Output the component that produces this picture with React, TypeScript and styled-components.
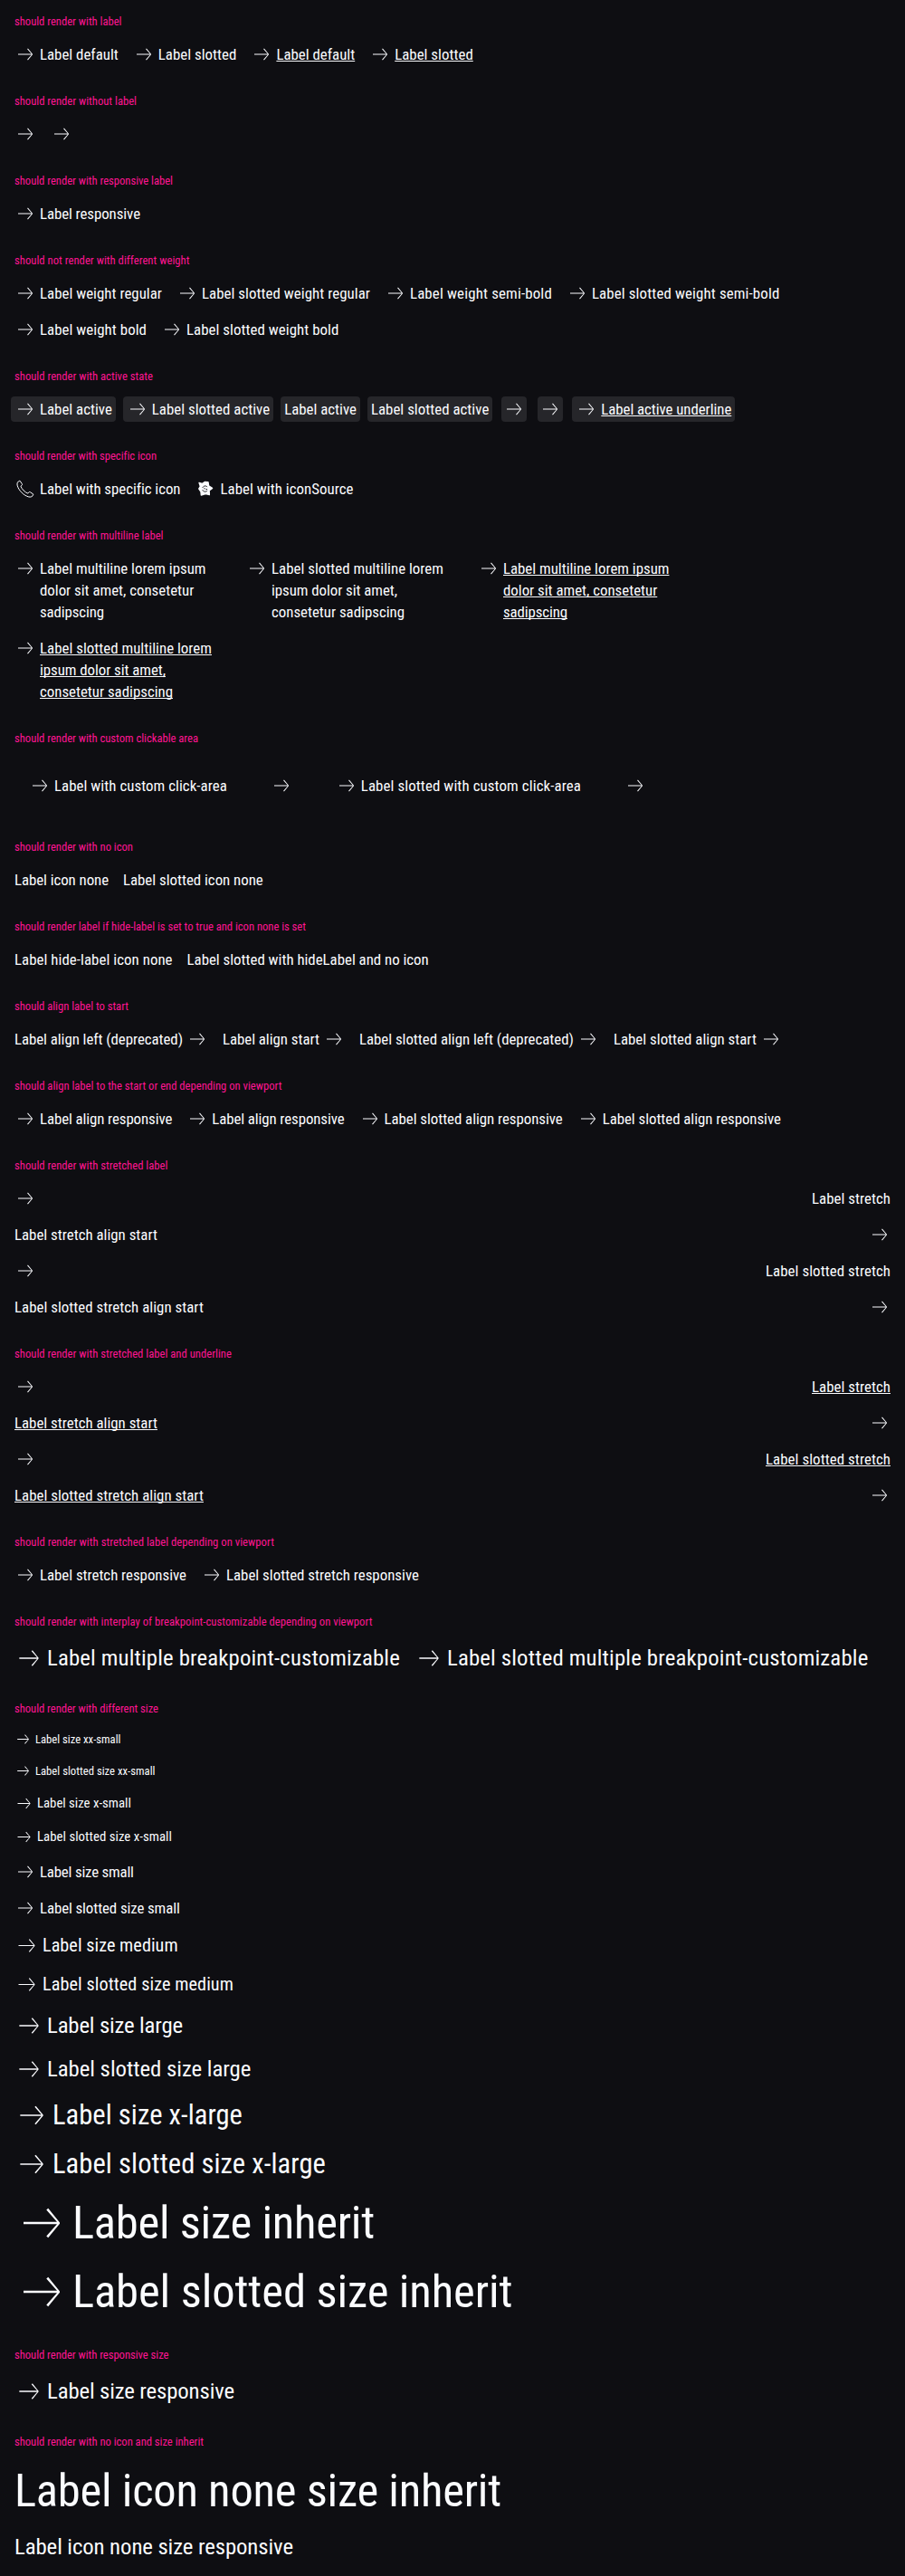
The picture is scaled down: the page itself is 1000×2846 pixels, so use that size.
import React, { useLayoutEffect, useRef, useState } from "react";
import styled, { createGlobalStyle, css } from "styled-components";

type Size = "xxs" | "xs" | "sm" | "md" | "lg" | "xl" | "inherit";

const sizes: Record<Size, { font: number; line: number }> = {
  xxs: { font: 12.66, line: 19 },
  xs: { font: 14.77, line: 21 },
  sm: { font: 16.88, line: 24 },
  md: { font: 20.2, line: 27 },
  lg: { font: 24.8, line: 32 },
  xl: { font: 30.5, line: 38 },
  inherit: { font: 50.6, line: 60 },
};

const GlobalStyle = createGlobalStyle`
  body {
    margin: 0;
    background: #0e0e12;
    color: #fbfcff;
    font-family: "Roboto Condensed", Roboto, "Liberation Sans", sans-serif;
    font-stretch: 75%;
    font-weight: 400;
  }
`;

const Page = styled.main`
  box-sizing: border-box;
  display: flex;
  flex-direction: column;
  gap: 32px;
  padding: 16px;
`;

const Section = styled.section`
  display: flex;
  flex-direction: column;
  gap: 16px;
`;

const Title = styled.h2`
  display: flex;
  margin: 0;
  font-size: 12.66px;
  font-weight: 400;
  line-height: 16px;
  color: #ff1493;
`;

const Items = styled.div<{ $column?: boolean }>`
  display: flex;
  flex-flow: ${(p) => (p.$column ? "column nowrap" : "row wrap")};
  align-items: ${(p) => (p.$column ? "stretch" : "flex-start")};
  gap: 16px;
`;

const Link = styled.a<{
  $size: Size;
  $active?: boolean;
  $bare?: boolean;
  $reverse?: boolean;
  $stretch?: boolean;
  $padded?: boolean;
  $block?: boolean;
}>`
  box-sizing: border-box;
  display: flex;
  flex-direction: ${(p) => (p.$reverse ? "row-reverse" : "row")};
  justify-content: ${(p) => (p.$stretch ? "space-between" : "flex-start")};
  align-items: flex-start;
  gap: 4px;
  width: ${(p) => (p.$stretch ? "100%" : p.$block ? "240px" : "auto")};
  font-size: ${(p) => sizes[p.$size].font}px;
  line-height: ${(p) => sizes[p.$size].line}px;
  color: inherit;
  ${(p) => p.$padded && css`padding: 16px;`}
  ${(p) =>
    p.$active &&
    css`
      margin: -2px ${p.$bare ? "-2px" : "-4px"};
      padding: 2px ${p.$bare ? "2px" : "4px"};
      border-radius: 4px;
      background: #26262a;
    `}
`;

const Text = styled.span<{ $underline?: boolean }>`
  display: block;
  white-space: nowrap;
  ${(p) =>
    p.$underline &&
    css`
      text-decoration: underline;
      text-decoration-thickness: 1px;
      text-decoration-skip-ink: none;
      text-underline-offset: 1px;
    `}
`;

const Lines = styled.span`
  display: flex;
  flex-direction: column;
  align-items: flex-start;
`;

const Glyph = styled.svg<{ $size: Size }>`
  flex: none;
  display: block;
  width: ${(p) => sizes[p.$size].line}px;
  height: ${(p) => sizes[p.$size].line}px;
  fill: #fbfcff;
`;

/** Text tracked so that its advance is exactly `width` pixels. */
function Tracked({ text, width, underline }: { text: string; width: number; underline?: boolean }) {
  const ref = useRef<HTMLSpanElement>(null);
  const [spacing, setSpacing] = useState(0);
  useLayoutEffect(() => {
    const el = ref.current;
    if (!el) return;
    el.style.letterSpacing = "0.001px";
    const natural = el.getBoundingClientRect().width;
    const next = (width - natural) / text.length;
    el.style.letterSpacing = `${next}px`;
    setSpacing(next);
  }, [text, width]);
  return (
    <Text ref={ref} $underline={underline} style={{ letterSpacing: spacing }}>
      {text}
    </Text>
  );
}

type IconName = "arrow" | "phone" | "flower" | "none";

function Icon({ name, size }: { name: IconName; size: Size }) {
  if (name === "phone")
    return (
      <Glyph $size={size} viewBox="0 0 24 24">
        <path
          d="M5.9 3.1C3.3 4 2.4 6.2 3.3 8.9c1.7 5.200 6.700 10.200 11.900 11.900 2.700.9 4.900-.1 5.700-2.600l-3.400-2.500c-.6-.4-1.300-.3-1.700.2l-1 1.200C11.800 16.100 8 12.300 6.900 9.200l1.200-1c.5-.4.6-1.100.2-1.700z"
          fill="none"
          stroke="#fbfcff"
          strokeWidth="1"
          strokeLinejoin="round"
        />
      </Glyph>
    );
  if (name === "flower")
    return (
      <Glyph $size={size} viewBox="0 0 24 24">
        <path
          d="M5 5.400L8.600 6.300 11.200 4.500 15 4.600 15.700 8.900 19.600 11.400 16.200 14 16.400 18.700 12.200 17.600 7.300 19.100 7 15.500 4.700 12 6.300 9.400Z"
          stroke="#fbfcff"
          strokeWidth="1.300"
          strokeLinejoin="round"
        />
        <path d="M8.800 11c.8-2.200 3.800-2.900 5.300-.9M8.700 13.200c.9 2.200 4 2.700 5.400.7" fill="none" stroke="#0e0e12" strokeWidth="0.900" />
        <path d="M10.400 11.800h1.300M12.600 12.500h1.400" stroke="#0e0e12" strokeWidth="1" />
      </Glyph>
    );
  return (
    <Glyph $size={size} viewBox="0 0 24 24">
      <path d="M14.900 5.500l-.8.700 4.700 5.300H4v1h14.800l-4.700 5.300.8.700L20 12.250v-.5z" />
    </Glyph>
  );
}

type Entry = {
  lines?: [string, number][];
  icon?: IconName;
  size?: Size;
  underline?: boolean;
  active?: boolean;
  reverse?: boolean;
  stretch?: boolean;
  padded?: boolean;
};

function LinkPure({ lines, icon = "arrow", size = "sm", underline, active, reverse, stretch, padded }: Entry) {
  return (
    <Link
      $size={size}
      $active={active}
      $bare={!lines}
      $reverse={reverse}
      $stretch={stretch}
      $padded={padded}
      $block={!!lines && lines.length > 1}
    >
      {icon !== "none" && <Icon name={icon} size={size} />}
      {lines && (
        <Lines>
          {lines.map(([text, width]) => (
            <Tracked key={text} text={text} width={width} underline={underline} />
          ))}
        </Lines>
      )}
    </Link>
  );
}

const l = (text: string, width: number, rest: Entry = {}): Entry => ({ lines: [[text, width]], ...rest });
const U = { underline: true };
const A = { active: true };
const none: Entry = { icon: "none" };
const start: Entry = { reverse: true };
const stretch: Entry = { stretch: true };
const stretchStart: Entry = { stretch: true, reverse: true };

const plainLines: [string, number][] = [
  ["Label multiline lorem ipsum", 183.5],
  ["dolor sit amet, consetetur", 170.3],
  ["sadipscing", 71],
];
const slottedLines: [string, number][] = [
  ["Label slotted multiline lorem", 190],
  ["ipsum dolor sit amet,", 139],
  ["consetetur sadipscing", 147],
];

const stretched = (extra: Entry): Entry[] => [
  l("Label stretch", 87, { ...stretch, ...extra }),
  l("Label stretch align start", 158, { ...stretchStart, ...extra }),
  l("Label slotted stretch", 138, { ...stretch, ...extra }),
  l("Label slotted stretch align start", 209, { ...stretchStart, ...extra }),
];

const sections: { title: string; width: number; column?: boolean; items: Entry[] }[] = [
  {
    title: "should render with label",
    width: 118.5,
    items: [
      l("Label default", 86.8),
      l("Label slotted", 86.6),
      l("Label default", 86.8, U),
      l("Label slotted", 86.6, U),
    ],
  },
  { title: "should render without label", width: 135, items: [{}, {}] },
  { title: "should render with responsive label", width: 175, items: [l("Label responsive", 111)] },
  {
    title: "should not render with different weight",
    width: 193.5,
    items: [
      l("Label weight regular", 135),
      l("Label slotted weight regular", 186),
      l("Label weight semi-bold", 157),
      l("Label slotted weight semi-bold", 207.5),
      l("Label weight bold", 118),
      l("Label slotted weight bold", 168.5),
    ],
  },
  {
    title: "should render with active state",
    width: 153,
    items: [
      l("Label active", 79.8, A),
      l("Label slotted active", 130.4, A),
      l("Label active", 79.8, { ...A, ...none }),
      l("Label slotted active", 130.4, { ...A, ...none }),
      A,
      A,
      l("Label active underline", 144, { ...A, ...U }),
    ],
  },
  {
    title: "should render with specific icon",
    width: 157,
    items: [l("Label with specific icon", 155.5, { icon: "phone" }), l("Label with iconSource", 147, { icon: "flower" })],
  },
  {
    title: "should render with multiline label",
    width: 164.5,
    items: [
      { lines: plainLines },
      { lines: slottedLines },
      { lines: plainLines, underline: true },
      { lines: slottedLines, underline: true },
    ],
  },
  {
    title: "should render with custom clickable area",
    width: 203,
    items: [
      l("Label with custom click-area", 190.8, { padded: true }),
      { padded: true },
      l("Label slotted with custom click-area", 243.2, { padded: true }),
      { padded: true },
    ],
  },
  {
    title: "should render with no icon",
    width: 131,
    items: [l("Label icon none", 104, none), l("Label slotted icon none", 154.8, none)],
  },
  {
    title: "should render label if hide-label is set to true and icon none is set",
    width: 322,
    items: [l("Label hide-label icon none", 174.6, none), l("Label slotted with hideLabel and no icon", 267.2, none)],
  },
  {
    title: "should align label to start",
    width: 126,
    items: [
      l("Label align left (deprecated)", 186, start),
      l("Label align start", 107, start),
      l("Label slotted align left (deprecated)", 237, start),
      l("Label slotted align start", 158, start),
    ],
  },
  {
    title: "should align label to the start or end depending on viewport",
    width: 295.5,
    items: [
      l("Label align responsive", 146.3),
      l("Label align responsive", 146.3),
      l("Label slotted align responsive", 197.2),
      l("Label slotted align responsive", 197.2),
    ],
  },
  { title: "should render with stretched label", width: 169.5, column: true, items: stretched({}) },
  { title: "should render with stretched label and underline", width: 240, column: true, items: stretched(U) },
  {
    title: "should render with stretched label depending on viewport",
    width: 287,
    items: [l("Label stretch responsive", 162), l("Label slotted stretch responsive", 213)],
  },
  {
    title: "should render with interplay of breakpoint-customizable depending on viewport",
    width: 395.5,
    items: [
      l("Label multiple breakpoint-customizable", 390, { size: "lg" }),
      l("Label slotted multiple breakpoint-customizable", 465.5, { size: "lg" }),
    ],
  },
  {
    title: "should render with different size",
    width: 159,
    column: true,
    items: [
      l("Label size xx-small", 94.5, { size: "xxs" }),
      l("Label slotted size xx-small", 132.5, { size: "xxs" }),
      l("Label size x-small", 103.8, { size: "xs" }),
      l("Label slotted size x-small", 149, { size: "xs" }),
      l("Label size small", 103.8, { size: "sm" }),
      l("Label slotted size small", 154.8, { size: "sm" }),
      l("Label size medium", 149.7, { size: "md" }),
      l("Label slotted size medium", 211, { size: "md" }),
      l("Label size large", 150, { size: "lg" }),
      l("Label slotted size large", 225.3, { size: "lg" }),
      l("Label size x-large", 210, { size: "xl" }),
      l("Label slotted size x-large", 302, { size: "xl" }),
      l("Label size inherit", 334, { size: "inherit" }),
      l("Label slotted size inherit", 486.5, { size: "inherit" }),
    ],
  },
  { title: "should render with responsive size", width: 170.5, items: [l("Label size responsive", 207, { size: "lg" })] },
  {
    title: "should render with no icon and size inherit",
    width: 209,
    column: true,
    items: [
      l("Label icon none size inherit", 538, { ...none, size: "inherit" }),
      l("Label icon none size responsive", 308, { ...none, size: "lg" }),
    ],
  },
];

export default function App() {
  return (
    <>
      <GlobalStyle />
      <Page>
        {sections.map((section) => (
          <Section key={section.title}>
            <Title>
              <Tracked text={section.title} width={section.width} />
            </Title>
            <Items $column={section.column}>
              {section.items.map((item, i) => (
                <LinkPure key={i} {...item} />
              ))}
            </Items>
          </Section>
        ))}
      </Page>
    </>
  );
}
